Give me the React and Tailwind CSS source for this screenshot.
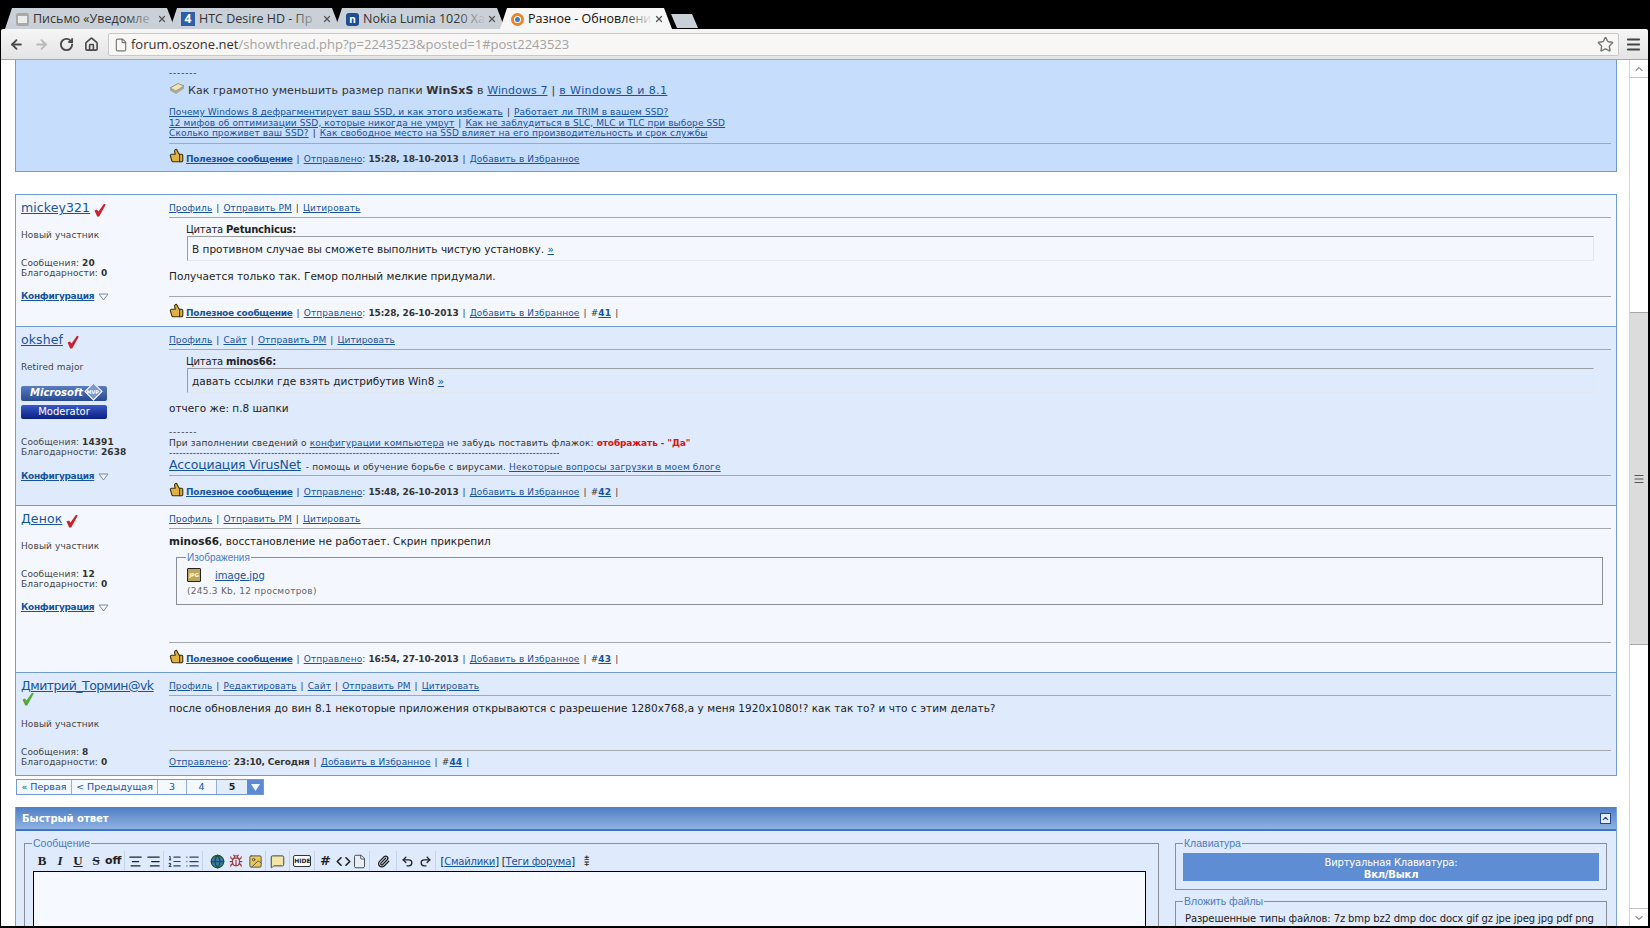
import React from 'react'
import {
  ArrowLeft, ArrowRight, RotateCw, Home, File, Star, Menu, ChevronUp, ChevronDown, ThumbsUp,
  AlignCenter, AlignRight, ListOrdered, List, Globe, Bug, Image, MessageSquare, Paperclip,
  Undo2, Redo2, Code, X
} from 'lucide-react'

// 공통 링크
const A = ({ children, className = '' }) => (
  <a className={`text-[#16549f] underline ${className}`}>{children}</a>
)

const Sep = () => <span className="mx-[4px] text-[#333]">|</span>

const Check = ({ color = '#c9232d' }) => (
  <svg width="14" height="14" viewBox="0 0 14 14" className="inline-block">
    <path d="M1.5 7.5 L4 6.5 L5.5 8.5 L11 0.8 L12.8 1.6 L6.2 13.4 L4.2 13.4 Z" fill={color} />
  </svg>
)

const Thumb = () => (
  <ThumbsUp size={15} className="inline-block -mt-[7px] -scale-x-100 fill-[#e0b040] text-[#3d3210]" strokeWidth={1.8} />
)

const Tri = () => (
  <svg width="11" height="8" viewBox="0 0 11 8" className="inline-block ml-[4px]">
    <path d="M1 1 H10 L5.5 7 Z" fill="#f4f8ff" stroke="#7d8a9c" />
  </svg>
)

function UserInfo({ name, nameClass = '', check = '#c9232d', rank, msgs, thanks, config = true, badges, wrapCheck }) {
  return (
    <div className="w-[153px] shrink-0 pl-[5px] font-['DejaVu_Sans',sans-serif] text-[9px] leading-[10px] tracking-[0.1px] text-[#444]">
      <div className="h-[24px] pt-[4px] text-[12.5px] leading-[18px] tracking-[0.1px]">
        <A className={`font-medium ${nameClass}`}>{name}</A>
        {!wrapCheck && <span className="ml-[3px] align-[-1px]"><Check color={check} /></span>}
      </div>
      {wrapCheck && <div className="-mt-[5px] h-[14px]"><Check color={check} /></div>}
      <div className={wrapCheck ? 'mt-[13px] h-[12px]' : 'mt-[11px] h-[12px]'}>{rank}</div>
      {badges ? (
        <div className="mt-[12px] mb-[18px] w-[86px]">
          <div className="relative h-[15px] rounded-[2px] bg-gradient-to-b from-[#5a7cc2] to-[#2a4a90] pl-[9px] text-[10px] font-bold italic leading-[13px] tracking-normal text-white">
            Microsoft
            <span className="absolute right-[7px] -top-[1px] h-[13px] w-[13px] rotate-45 border border-white bg-[#7d9ad0]"></span>
            <span className="absolute right-[8px] top-[3px] text-[5px] leading-[6px] not-italic text-white">MVP</span>
          </div>
          <div className="mt-[4px] h-[14px] rounded-[2px] bg-gradient-to-b from-[#3a58c8] to-[#0c1f80] text-center text-[10px] leading-[13px] tracking-normal text-white">
            Moderator
          </div>
        </div>
      ) : (
        <div className="h-[16px]"></div>
      )}
      <div>Сообщения: <b className="text-[#333]">{msgs}</b></div>
      <div>Благодарности: <b className="text-[#333]">{thanks}</b></div>
      {config && (
        <div className={badges ? 'mt-[14px] h-[12px]' : 'mt-[13px] h-[12px]'}>
          <A className="font-bold tracking-[-0.3px]">Конфигурация</A>
          <Tri />
        </div>
      )}
    </div>
  )
}

function PostLinks({ items }) {
  return (
    <div className="h-[23px] shrink-0 border-b border-[#a5a9ae] pt-[7px] text-[9px] leading-[12px] tracking-[0.1px]">
      {items.map((t, i) => (
        <span key={t}>
          {i > 0 && <Sep />}
          <A>{t}</A>
        </span>
      ))}
    </div>
  )
}

function PostFoot({ date, num, thanks = true, pad = 'pt-[10px]' }) {
  return (
    <div className={`mt-auto h-[30px] shrink-0 border-t border-[#a5a9ae] text-[9px] leading-[12px] tracking-[0.12px] text-[#333] ${pad}`}>
      {thanks && (
        <>
          <Thumb />
          <A className="ml-[2px] font-bold tracking-[-0.3px]">Полезное сообщение</A>
          <Sep />
        </>
      )}
      <A>Отправлено</A>: <b className="tracking-[-0.16px]">{date}</b>
      <Sep />
      <A>Добавить в Избранное</A>
      {num && (
        <>
          <Sep />
          #<A className="font-bold">{num}</A>
          <Sep />
        </>
      )}
    </div>
  )
}

function Quote({ who, children }) {
  return (
    <div className="ml-[18px] mr-[17px] mt-[3px] font-['DejaVu_Sans',sans-serif]">
      <div className="h-[15px] -ml-[1px] pt-[2px] text-[10px] leading-[14px] tracking-[-0.2px] text-[#222]">Цитата <b>{who}</b></div>
      <div className="h-[25px] border-t border-l border-t-[#9a9ea4] border-l-[#9a9ea4] border-r border-r-[#e4e8ee] border-b border-b-[#e4e8ee] pl-[4px] pt-[4px] text-[10.5px] leading-[16px] text-[#222]">
        {children}
      </div>
    </div>
  )
}

function Post({ bg, h, user, links, foot, children }) {
  return (
    <div className={`flex border-t border-[#6f9ad2] ${bg} ${h}`}>
      <UserInfo {...user} />
      <div className="flex min-w-0 flex-1 flex-col pr-[5px] font-['DejaVu_Sans',sans-serif]">
        <PostLinks items={links} />
        {children}
        {foot}
      </div>
    </div>
  )
}

const Body = ({ className = '', children }) => (
  <div className={`text-[10.5px] leading-[16px] text-[#222] ${className}`}>{children}</div>
)

function Tab({ active, title, icon, w, z }) {
  return (
    <div
      className={`relative -ml-[5px] flex h-[21px] items-center gap-[4px] pl-[11px] pr-[8px] pt-[1px] font-['Open_Sans',sans-serif] text-[12.5px] [clip-path:polygon(0_100%,7px_0,calc(100%_-_8px)_0,100%_100%)] ${w} ${z} ${active ? 'bg-[#f6f6f6] text-[#111]' : 'bg-[#c9d0d8] text-[#333]'}`}
    >
      {icon}
      <span className="min-w-0 flex-1 whitespace-nowrap">{title}</span>
      <span className={`absolute right-[19px] top-0 h-full w-[30px] bg-gradient-to-r from-transparent ${active ? 'to-[#f6f6f6]' : 'to-[#c9d0d8]'}`}></span>
      <X size={10} strokeWidth={3} className="relative shrink-0 text-[#555]" />
    </div>
  )
}

function TabBar() {
  return (
    <div className="flex h-[29px] shrink-0 items-end bg-black pl-[10px]">
      <Tab
        w="w-[170px]"
        z="z-[1]"
        title="Письмо «Уведомле"
        icon={<span className="flex h-[13px] w-[13px] shrink-0 items-center justify-center rounded-[2px] bg-[#a9a9a9]"><span className="h-[7px] w-[9px] bg-[#ececec]"></span></span>}
      />
      <Tab
        w="w-[170px]"
        z="z-[2]"
        title="HTC Desire HD - Пр"
        icon={<span className="flex h-[14px] w-[14px] shrink-0 items-center justify-center bg-[#2c5fa8] text-[12px] font-bold leading-none text-white">4</span>}
      />
      <Tab
        w="w-[170px]"
        z="z-[3]"
        title="Nokia Lumia 1020 Xa"
        icon={<span className="flex h-[13px] w-[13px] shrink-0 items-center justify-center rounded-[3px] bg-[#1e4d96] text-[10px] font-bold leading-none text-white">n</span>}
      />
      <Tab
        active
        w="w-[172px]"
        z="z-[4]"
        title="Разное - Обновлени"
        icon={<span className="flex h-[13px] w-[13px] shrink-0 items-center justify-center rounded-full border-[3px] border-[#e8862c] bg-white"><span className="h-[5px] w-[5px] rounded-full bg-[#3a7fd0]"></span></span>}
      />
      <div className="-ml-[1px] mb-[1px] h-[14px] w-[27px] bg-[#c9d0d8] [clip-path:polygon(0_0,calc(100%_-_6px)_0,100%_100%,6px_100%)]"></div>
    </div>
  )
}

function Toolbar() {
  return (
    <div className="ml-[1px] mr-[2px] flex h-[31px] shrink-0 items-center rounded-t-[2px] border-b border-[#a8a8a8] bg-gradient-to-b from-[#f6f6f6] to-[#e4e4e4] pt-[1px]">
      <div className="flex w-[107px] shrink-0 items-center gap-[10px] pl-[8px]">
        <ArrowLeft size={15} strokeWidth={3} className="text-[#4a4a4a]" />
        <ArrowRight size={15} strokeWidth={3} className="text-[#b9b9b9]" />
        <RotateCw size={15} strokeWidth={3} className="text-[#4a4a4a]" />
        <Home size={15} strokeWidth={2.6} className="text-[#4a4a4a]" />
      </div>
      <div className="flex h-[23px] min-w-0 flex-1 items-center rounded-[2px] border border-[#c8c8c8] bg-[#f8f7f5] pl-[5px] pr-[4px] font-['Open_Sans',sans-serif] text-[13px]">
        <File size={14} className="mr-[3px] text-[#777]" />
        <span className="text-[#333]">forum.oszone.net</span>
        <span className="text-[#a3a3a3]">/showthread.php?p=2243523&amp;posted=1#post2243523</span>
        <Star size={17} className="ml-auto text-[#777]" />
      </div>
      <div className="flex w-[29px] shrink-0 justify-center">
        <Menu size={17} strokeWidth={2.6} className="text-[#444]" />
      </div>
    </div>
  )
}

function Scrollbar() {
  return (
    <div className="flex w-[19px] shrink-0 flex-col border-l border-[#d6d6d6] bg-white">
      <div className="flex h-[18px] items-center justify-center border-b border-[#c4c4c4]">
        <ChevronUp size={12} strokeWidth={2} className="text-[#444]" />
      </div>
      <div className="mt-[234px] flex h-[333px] items-center justify-center border-y border-[#a8a8a8] bg-[#dcdcdc]">
        <Menu size={12} strokeWidth={2.4} className="text-[#555]" />
      </div>
      <div className="mt-auto flex h-[18px] items-center justify-center border-t border-[#c4c4c4]">
        <ChevronDown size={12} strokeWidth={2} className="text-[#444]" />
      </div>
    </div>
  )
}

function TopPost() {
  return (
    <div className="ml-[14px] mr-[12px] h-[112px] border-x border-b border-[#6f9ad2] bg-[#c6ddfb] pl-[153px] pr-[5px] font-['DejaVu_Sans',sans-serif]">
      <div className="pt-[8px] text-[9px] leading-[10px] tracking-[0.8px] text-[#333]">-------</div>
      <div className="mt-[5px] flex h-[16px] items-center text-[11px] tracking-[0.08px] text-[#333]">
        <svg width="16" height="13" viewBox="0 0 16 13" className="mr-[3px] -mt-[6px]">
          <path d="M1 6 L9 1.5 L15 4 L7 9 Z" fill="#f2e6b0" stroke="#7a7a6a" strokeWidth="0.8" />
          <path d="M1 6 L1 8.5 L7 12 L15 6.5 V4 L7 9 Z" fill="#a8a8a0" />
        </svg>
        Как грамотно уменьшить размер папки&nbsp;<b>WinSxS</b>&nbsp;в&nbsp;<A>Windows 7</A>
        <Sep />
        <A className="tracking-[0.4px]">в Windows 8 и 8.1</A>
      </div>
      <div className="mt-[8px] text-[9px] leading-[10.5px] tracking-[0.1px] text-[#333]">
        <div><A>Почему Windows 8 дефрагментирует ваш SSD, и как этого избежать</A><Sep /><A>Работает ли TRIM в вашем SSD?</A></div>
        <div><A>12 мифов об оптимизации SSD, которые никогда не умрут</A><Sep /><A>Как не заблудиться в SLC, MLC и TLC при выборе SSD</A></div>
        <div><A>Сколько проживет ваш SSD?</A><Sep /><A>Как свободное место на SSD влияет на его производительность и срок службы</A></div>
      </div>
      <div className="mt-[4px]">
        <PostFoot date="15:28, 18-10-2013" pad="pt-[9px]" />
      </div>
    </div>
  )
}

function Pager() {
  const cell = 'flex items-center justify-center border-r border-[#8fb0dc] text-[#16549f]'
  return (
    <div className="ml-[15px] mt-[3px] flex h-[16px] w-[248px] border border-[#6f9ad2] bg-[#f4f8ff] font-['DejaVu_Sans',sans-serif] text-[9.5px]">
      <div className={`${cell} w-[55px]`}>« Первая</div>
      <div className={`${cell} w-[86px]`}>&lt; Предыдущая</div>
      <div className={`${cell} w-[29px]`}>3</div>
      <div className={`${cell} w-[30px]`}>4</div>
      <div className="flex w-[30px] items-center justify-center bg-[#e2ecfb] font-bold text-[#222]">5</div>
      <div className="flex flex-1 items-center justify-center bg-[#5d8bd2]">
        <svg width="9" height="7" viewBox="0 0 9 7"><path d="M0 0 H9 L4.5 7 Z" fill="#eef4ff" /></svg>
      </div>
    </div>
  )
}

const TB = ({ children, className = '' }) => (
  <span className={`flex h-[20px] w-[18px] shrink-0 items-center justify-center ${className}`}>{children}</span>
)
const TSep = () => <span className="mx-[1px] h-[20px] w-px bg-[#c5d3e6]"></span>

function EditorToolbar() {
  return (
    <div className="flex h-[22px] items-center pt-[2px] font-['DejaVu_Sans',sans-serif] text-[#222]">
      <TB className="font-['Liberation_Serif',serif] text-[13px] font-bold">B</TB>
      <TB className="font-['Liberation_Serif',serif] text-[13px] font-bold italic">I</TB>
      <TB className="font-['Liberation_Serif',serif] text-[13px] font-bold underline">U</TB>
      <TB className="font-['Liberation_Serif',serif] text-[13px] font-bold line-through">S</TB>
      <span className="mr-[2px] text-[11px] font-bold">off</span>
      <TSep />
      <TB><AlignCenter size={15} strokeWidth={2} /></TB>
      <TB><AlignRight size={15} strokeWidth={2} /></TB>
      <TSep />
      <TB><ListOrdered size={15} strokeWidth={1.8} className="text-[#26456f]" /></TB>
      <TB><List size={15} strokeWidth={2} className="text-[#26456f]" /></TB>
      <TSep />
      <TB className="ml-[4px]"><Globe size={15} strokeWidth={2} className="fill-[#3a78b8] text-[#1e5530]" /></TB>
      <TB className="ml-[1px]"><Bug size={14} strokeWidth={2} className="text-[#9c3a3a]" /></TB>
      <TB className="ml-[1px]"><Image size={15} strokeWidth={1.6} className="fill-[#ecc94f] text-[#555]" /></TB>
      <TSep />
      <TB className="w-[21px]"><MessageSquare size={15} strokeWidth={1.6} className="fill-[#efe6a8] text-[#444]" /></TB>
      <TSep />
      <span className="mx-[2px] flex h-[12px] w-[18px] shrink-0 items-center justify-center rounded-[2px] border border-[#333] bg-white text-[6px] font-bold leading-none">HIDE</span>
      <TSep />
      <TB className="text-[13px] font-bold">#</TB>
      <TB><Code size={15} strokeWidth={2.6} /></TB>
      <TB className="-ml-[2px]"><File size={15} strokeWidth={1.5} className="fill-[#e8eef6] text-[#444]" /></TB>
      <TSep />
      <TB className="w-[24px]"><Paperclip size={13} strokeWidth={2.4} /></TB>
      <TSep />
      <TB><Undo2 size={13} strokeWidth={2.4} /></TB>
      <TB><Redo2 size={13} strokeWidth={2.4} /></TB>
      <TSep />
      <span className="ml-[3px] text-[10px] tracking-[-0.2px]">[<A>Смайлики</A>] [<A>Теги форума</A>]</span>
      <span className="ml-[9px] flex flex-col items-center text-[7px] font-bold leading-[6px]"><span>±</span><span>∓</span></span>
    </div>
  )
}

function QuickReply() {
  return (
    <div className="ml-[14px] mr-[12px] mt-[12px] flex-1 overflow-hidden border-x border-[#7ea3d8] bg-[#dfeafc] font-['DejaVu_Sans',sans-serif]">
      <div className="flex h-[24px] items-center justify-between border-b-2 border-[#3f75c2] bg-gradient-to-b from-[#4f7ec6] to-[#8fb2e2] pl-[6px] pr-[5px] text-[10px] font-bold text-white">
        Быстрый ответ
        <span className="flex h-[11px] w-[11px] items-center justify-center border border-[#224a86] bg-[#e4eefc]">
          <ChevronUp size={9} strokeWidth={3} className="text-[#224a86]" />
        </span>
      </div>
      <div className="flex pl-[8px] pr-[9px] pt-[7px]">
        <fieldset className="h-[120px] w-[1135px] shrink-0 border border-[#8a8f96] pl-[8px] pr-[12px]">
          <legend className="-ml-[1px] px-[1px] font-['Liberation_Sans',sans-serif] text-[10.5px] leading-[11px] text-[#4b7bc0]">Сообщение</legend>
          <EditorToolbar />
          <div className="h-[80px] border border-black bg-[#f6f9ff]"></div>
        </fieldset>
        <div className="ml-[16px] min-w-0 flex-1">
          <fieldset className="h-[52px] border border-[#8a8f96] px-[7px]">
            <legend className="px-[1px] font-['Liberation_Sans',sans-serif] text-[10.5px] leading-[11px] text-[#4b7bc0]">Клавиатура</legend>
            <div className="mt-[4px] flex h-[28px] flex-col items-center justify-center bg-[#5f8dd3] pt-[3px] text-[10px] leading-[12px] tracking-[-0.2px] text-white">
              <span>Виртуальная Клавиатура:</span>
              <b>Вкл/Выкл</b>
            </div>
          </fieldset>
          <fieldset className="mt-[6px] h-[50px] border border-[#8a8f96] px-[9px]">
            <legend className="-ml-[2px] px-[1px] font-['Liberation_Sans',sans-serif] text-[10.5px] leading-[11px] text-[#4b7bc0]">Вложить файлы</legend>
            <div className="whitespace-nowrap pt-[5px] text-[10px] leading-[13px] tracking-[-0.12px] text-[#222]">
              Разрешенные типы файлов: 7z bmp bz2 dmp doc docx gif gz jpe jpeg jpg pdf png
            </div>
          </fieldset>
        </div>
      </div>
    </div>
  )
}

export default function App() {
  return (
    <div className="flex h-[928px] w-[1650px] flex-col overflow-hidden bg-black">
      <TabBar />
      <Toolbar />
      <div className="ml-[1px] mr-[2px] mb-[2px] flex min-h-0 flex-1 bg-white">
        <div className="flex min-w-0 flex-1 flex-col overflow-hidden">
          <TopPost />

          {/* 게시글 목록 */}
          <div className="ml-[14px] mr-[12px] mt-[22px] border-x border-b border-[#6f9ad2]">
            <Post
              bg="bg-[#f4f8fe]"
              h="h-[132px]"
              user={{ name: 'mickey321', rank: 'Новый участник', msgs: 20, thanks: 0 }}
              links={['Профиль', 'Отправить PM', 'Цитировать']}
              foot={<PostFoot date="15:28, 26-10-2013" num="41" />}
            >
              <Quote who="Petunchicus:">В противном случае вы сможете выполнить чистую установку. <A>»</A></Quote>
              <Body className="mt-[7px]">Получается только так. Гемор полный мелкие придумали.</Body>
            </Post>
            <Post
              bg="bg-[#dfeafc]"
              h="h-[179px]"
              user={{ name: 'okshef', rank: 'Retired major', msgs: 14391, thanks: 2638, badges: true }}
              links={['Профиль', 'Сайт', 'Отправить PM', 'Цитировать']}
              foot={<PostFoot date="15:48, 26-10-2013" num="42" />}
            >
              <Quote who="minos66:">давать ссылки где взять дистрибутив Win8 <A>»</A></Quote>
              <Body className="mt-[7px]">отчего же: п.8 шапки</Body>
              <div className="mt-[11px] text-[9px] leading-[10px] tracking-[0.15px] text-[#333]">
                <div className="tracking-[0.8px]">-------</div>
                <div className="mt-[1px]">
                  При заполнении сведений о <A>конфигурации компьютера</A> не забудь поставить флажок: <b className="tracking-[-0.13px] text-[#e01010]">отображать - "Да"</b>
                </div>
                <div className="h-[10px] overflow-hidden">-------------------------------------------------------------------------------------------------------------------</div>
                <div className="flex items-end">
                  <A className="text-[12.5px] font-medium leading-[14px] tracking-[-0.2px]">Ассоциация VirusNet</A>
                  <span className="ml-[5px]">- помощь и обучение борьбе с вирусами.&nbsp;</span>
                  <A>Некоторые вопросы загрузки в моем блоге</A>
                </div>
              </div>
            </Post>
            <Post
              bg="bg-[#f4f8fe]"
              h="h-[167px]"
              user={{ name: 'Денок', rank: 'Новый участник', msgs: 12, thanks: 0 }}
              links={['Профиль', 'Отправить PM', 'Цитировать']}
              foot={<PostFoot date="16:54, 27-10-2013" num="43" />}
            >
              <Body className="mt-[4px]"><b>minos66</b>, восстановление не работает. Скрин прикрепил</Body>
              <fieldset className="ml-[7px] mr-[8px] mt-[3px] h-[53px] border border-[#8a8f96] pl-[10px]">
                <legend className="-ml-[1px] px-[1px] font-['Liberation_Sans',sans-serif] text-[10px] leading-[11px] text-[#4b7bc0]">Изображения</legend>
                <div className="mt-[3px] flex h-[18px] items-center">
                  <span className="flex h-[14px] w-[14px] items-center justify-center rounded-[1px] border border-[#222] bg-[#b8a860] text-[5px] font-bold leading-none text-white">JPG</span>
                  <A className="ml-[14px] text-[10px]">image.jpg</A>
                </div>
                <div className="mt-[1px] text-[9px] leading-[12px] tracking-[0.25px] text-[#666]">(245.3 Kb, 12 просмотров)</div>
              </fieldset>
            </Post>
            <Post
              bg="bg-[#dfeafc]"
              h="h-[103px]"
              user={{ name: 'Дмитрий_Тормин@vk', nameClass: 'tracking-[-0.5px]', check: '#58a838', rank: 'Новый участник', msgs: 8, thanks: 0, config: false, wrapCheck: true }}
              links={['Профиль', 'Редактировать', 'Сайт', 'Отправить PM', 'Цитировать']}
              foot={<div className="mt-auto h-[25px] shrink-0 border-t border-[#a5a9ae] pt-[5px] text-[9px] leading-[12px] tracking-[0.12px] text-[#333]">
                <A>Отправлено</A>: <b className="tracking-[-0.16px]">23:10, Сегодня</b><Sep /><A>Добавить в Избранное</A><Sep />#<A className="font-bold">44</A><Sep />
              </div>}
            >
              <Body className="mt-[4px] tracking-[0.05px]">после обновления до вин 8.1 некоторые приложения открываются с разрешение 1280х768,а у меня 1920х1080!? как так то? и что с этим делать?</Body>
            </Post>
          </div>

          <Pager />
          <QuickReply />
        </div>
        <Scrollbar />
      </div>
    </div>
  )
}
